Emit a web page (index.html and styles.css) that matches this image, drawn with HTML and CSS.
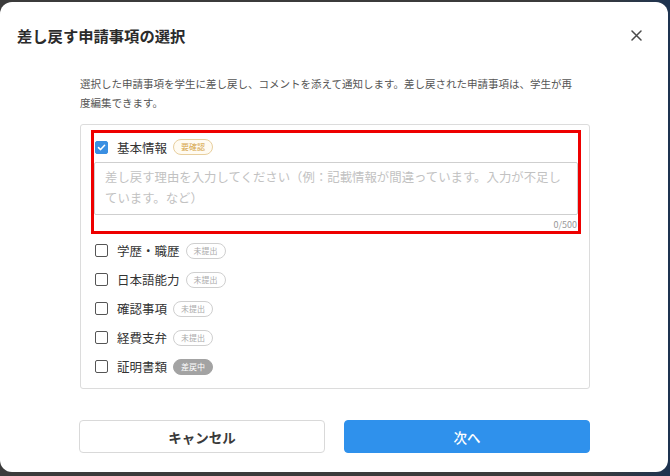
FILE: index.html
```html
<!DOCTYPE html>
<html lang="ja">
<head>
<meta charset="utf-8">
<link rel="stylesheet" href="styles.css">
</head>
<body>
<div class="dialog">
  <div class="header">
    <h1 class="title">差し戻す申請事項の選択</h1>
    <svg class="close" width="11" height="11" viewBox="0 0 11 11"><path d="M1 1L10 10M10 1L1 10" stroke="#4a4a4a" stroke-width="1.5" fill="none" stroke-linecap="round"/></svg>
  </div>
  <div class="body">
    <p class="desc">選択した申請事項を学生に差し戻し、コメントを添えて通知します。差し戻された申請事項は、学生が再度編集できます。</p>
    <div class="list">
      <div class="highlight">
        <div class="row">
          <span class="check checked"><svg width="9" height="9" viewBox="0 0 9 9"><path d="M1.5 4.6L3.6 6.6L7.6 2.2" stroke="#fff" stroke-width="1.5" fill="none" stroke-linecap="round" stroke-linejoin="round"/></svg></span>
          <span class="label">基本情報</span>
          <span class="badge warn">要確認</span>
        </div>
        <textarea class="reason" placeholder="差し戻す理由を入力してください（例：記載情報が間違っています。入力が不足しています。など）"></textarea>
        <div class="counter">0/500</div>
      </div>
      <div class="row item">
        <span class="check"></span><span class="label">学歴・職歴</span><span class="badge none">未提出</span>
      </div>
      <div class="row item">
        <span class="check"></span><span class="label">日本語能力</span><span class="badge none">未提出</span>
      </div>
      <div class="row item">
        <span class="check"></span><span class="label">確認事項</span><span class="badge none">未提出</span>
      </div>
      <div class="row item">
        <span class="check"></span><span class="label">経費支弁</span><span class="badge none">未提出</span>
      </div>
      <div class="row item">
        <span class="check"></span><span class="label">証明書類</span><span class="badge back">差戻中</span>
      </div>
    </div>
    <div class="actions">
      <button class="btn cancel">キャンセル</button>
      <button class="btn next">次へ</button>
    </div>
  </div>
</div>
</body>
</html>
```
FILE: styles.css
```css
* { box-sizing: border-box; }
html, body { margin: 0; padding: 0; }
body {
  width: 670px;
  height: 476px;
  overflow: hidden;
  background: linear-gradient(to right, #3b3b3b 0%, #3b3b3b 88%, #1d3350 100%);
  font-family: "Noto Sans CJK JP", "Noto Sans", sans-serif;
  color: #333;
}
.dialog {
  margin-top: 2px;
  width: 668px;
  height: 470px;
  background: #fff;
  border-radius: 12px;
  display: flex;
  flex-direction: column;
}
.header {
  height: 66px;
  display: flex;
  align-items: center;
  justify-content: space-between;
  padding: 0 26px 0 17px;
}
.title {
  margin: 0;
  font-size: 15.3px;
  font-weight: 700;
  color: #2b2b2b;
}
.close { display: block; }
.body {
  padding: 6px 78px 0 80px;
  display: flex;
  flex-direction: column;
}
.desc {
  margin: 0;
  max-width: 498px;
  font-size: 10.5px;
  line-height: 19px;
  color: #555;
}
.list {
  margin-top: 12px;
  border: 1px solid #dcdcdc;
  border-radius: 3px;
  padding: 5px 8px 7px 10px;
  width: 510px;
}
.highlight {
  border: 3px solid #ee0000;
  padding: 0;
}
.row {
  height: 28px;
  display: flex;
  align-items: center;
  padding-left: 1px;
}
.item {
  height: 29px;
  padding-left: 4px;
}
.highlight + .item { margin-top: 2px; }
.check {
  width: 13px;
  height: 13px;
  border: 1.5px solid #555;
  border-radius: 2px;
  display: flex;
  align-items: center;
  justify-content: center;
  flex: none;
}
.check.checked {
  background: #3a8fe2;
  border-color: #3a8fe2;
}
.check svg { display: block; }
.label {
  margin-left: 9px;
  font-size: 12.5px;
  color: #333;
}
.badge {
  margin-left: 6px;
  height: 16px;
  padding: 0 7px;
  border-radius: 8px;
  font-size: 8px;
  line-height: 14px;
  border: 1px solid;
  display: inline-flex;
  align-items: center;
}
.badge.warn {
  border-color: #e8cf9e;
  color: #d6a54a;
  background: #fffbf2;
}
.badge.none {
  border-color: #cfcfcf;
  color: #aaa;
  background: #fff;
}
.badge.back {
  border-color: #a3a3a3;
  background: #a3a3a3;
  color: #fff;
}
.reason {
  display: block;
  width: 100%;
  height: 53px;
  margin-top: 1px;
  border: 1px solid #cfcfcf;
  border-radius: 2px;
  padding: 4px 10px;
  font-family: "Noto Sans CJK JP", "Noto Sans", sans-serif;
  font-size: 12.4px;
  line-height: 21px;
  resize: none;
  color: #333;
  outline: none;
}
.reason::placeholder { color: #c2c2c2; }
.counter {
  text-align: right;
  font-size: 9px;
  line-height: 11px;
  margin-top: 4px;
  margin-bottom: 1px;
  padding-right: 1px;
  color: #999;
}
.actions {
  margin-top: 31px;
  margin-left: -1px;
  display: flex;
  gap: 19px;
}
.btn {
  width: 246px;
  height: 33px;
  border-radius: 4px;
  font-family: "Noto Sans CJK JP", "Noto Sans", sans-serif;
  font-size: 13.5px;
  font-weight: 700;
  cursor: pointer;
}
.cancel {
  background: #fff;
  border: 1px solid #d9d9d9;
  color: #3a3a3a;
}
.next {
  background: #2f91ec;
  border: 1px solid #2f91ec;
  color: #fff;
  font-weight: 500;
}
```
